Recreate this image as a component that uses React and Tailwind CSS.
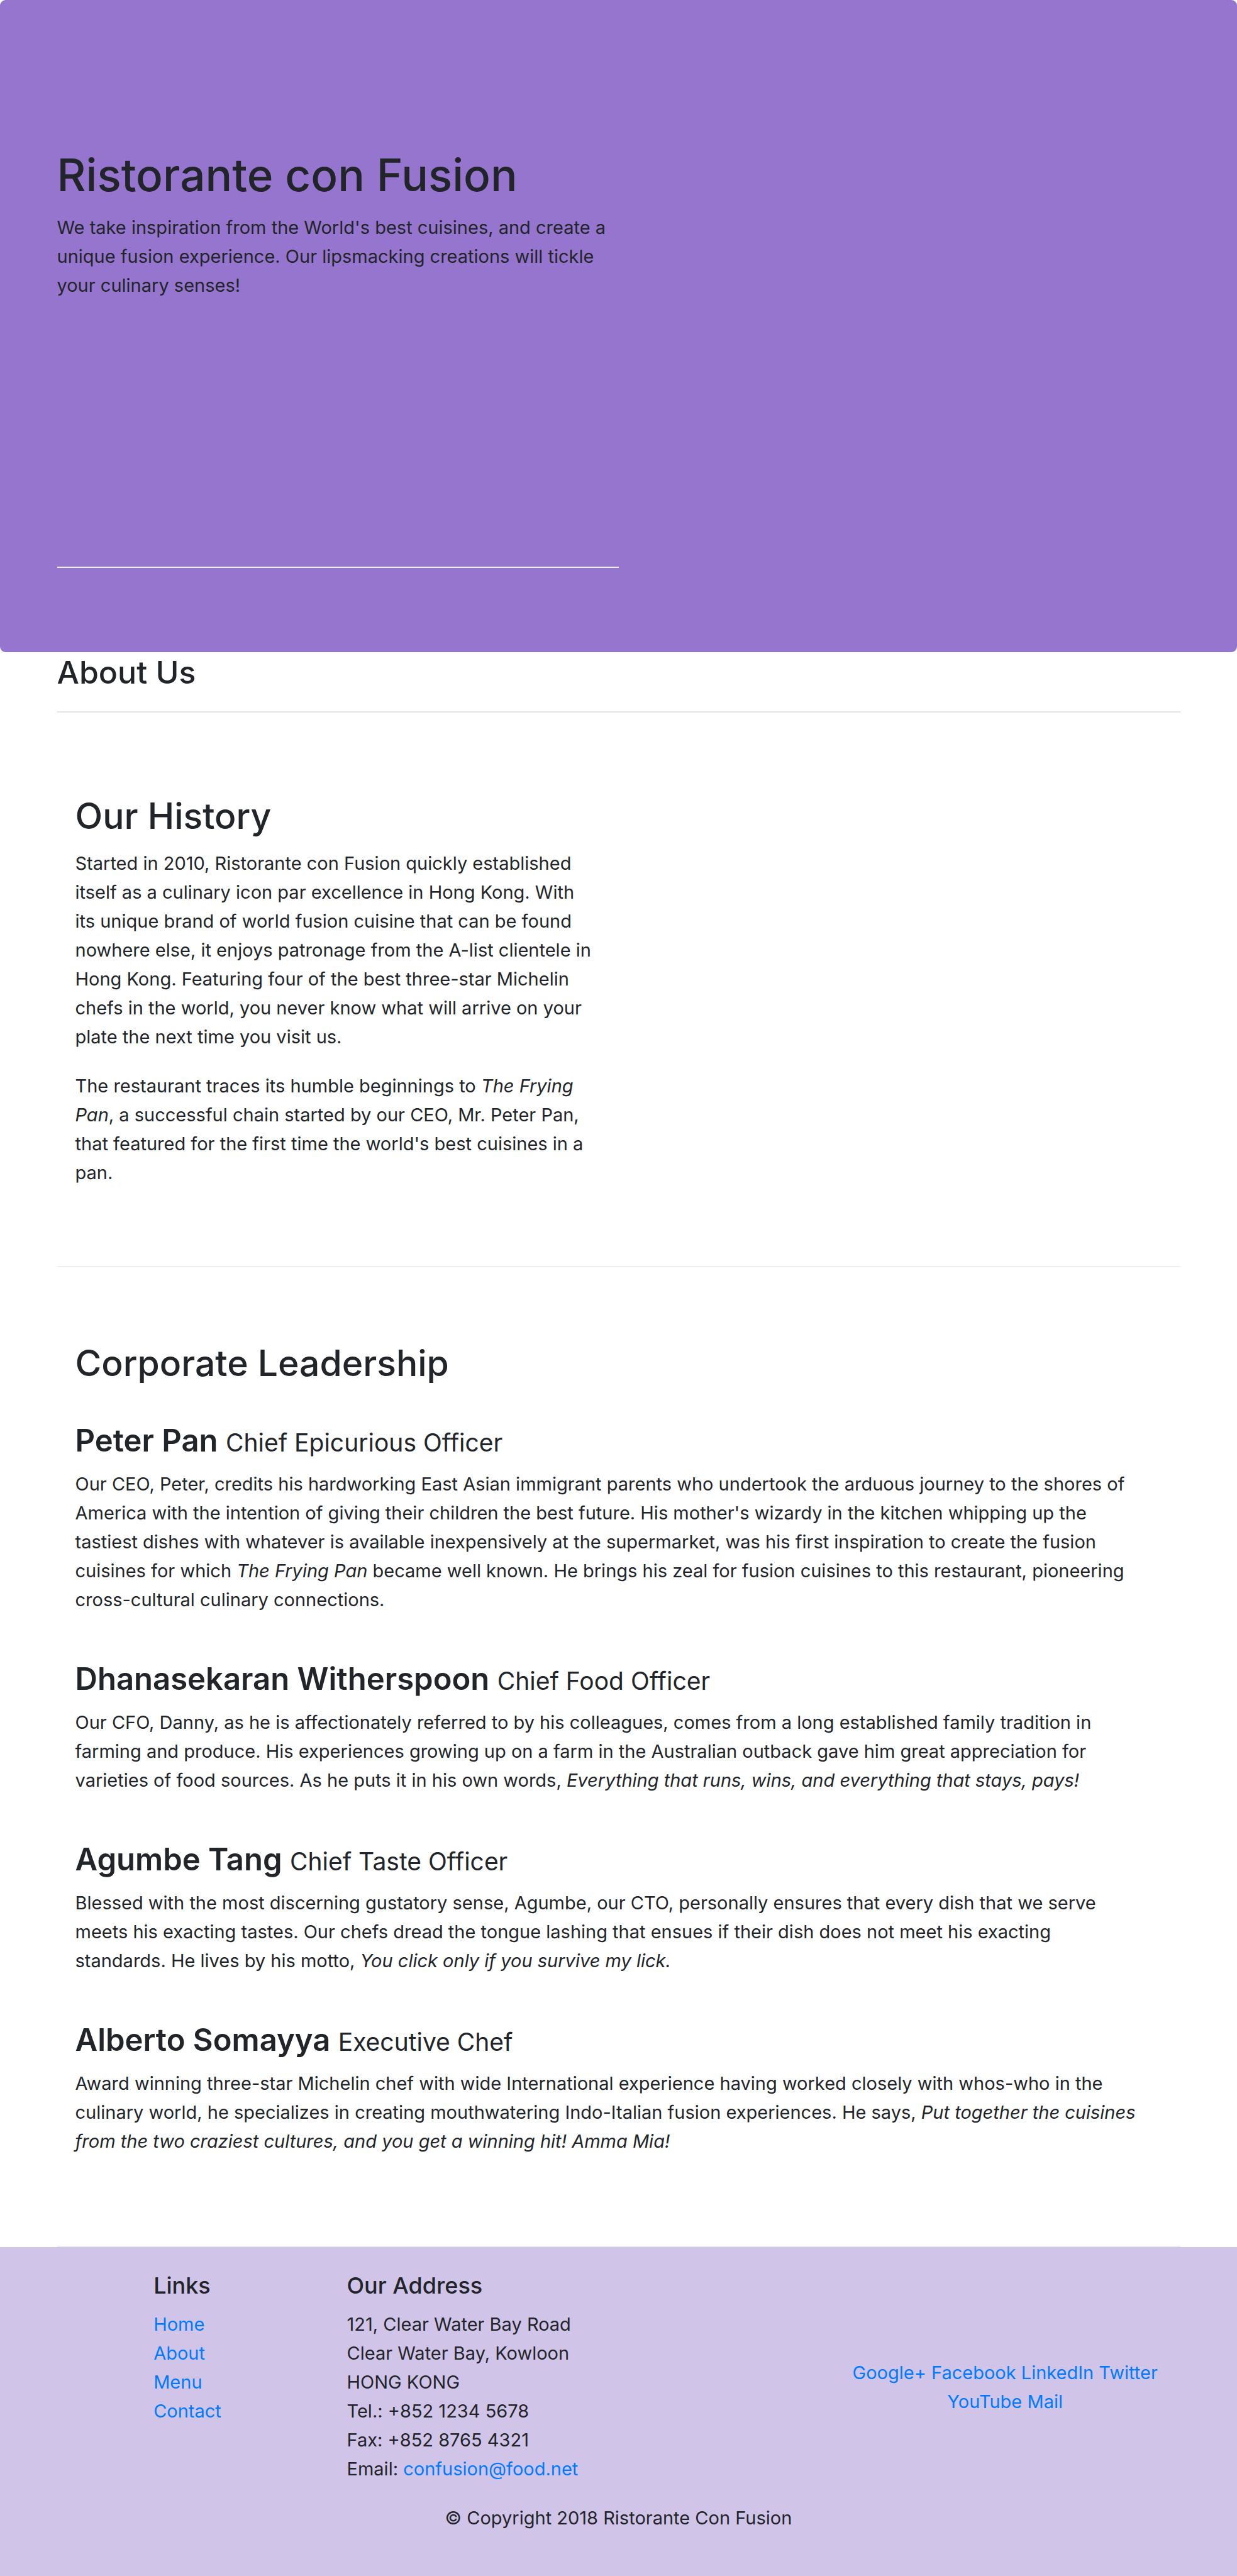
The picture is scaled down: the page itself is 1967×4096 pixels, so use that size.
const leaders = [
  {
    name: "Peter Pan",
    role: "Chief Epicurious Officer",
    bio: (
      <>
        Our CEO, Peter, credits his hardworking East Asian immigrant parents who undertook the arduous journey to the
        shores of America with the intention of giving their children the best future. His mother's wizardy in the
        kitchen whipping up the tastiest dishes with whatever is available inexpensively at the supermarket, was his
        first inspiration to create the fusion cuisines for which <em>The Frying Pan</em> became well known. He brings
        his zeal for fusion cuisines to this restaurant, pioneering cross-cultural culinary connections.
      </>
    ),
  },
  {
    name: "Dhanasekaran Witherspoon",
    role: "Chief Food Officer",
    bio: (
      <>
        Our CFO, Danny, as he is affectionately referred to by his colleagues, comes from a long established family
        tradition in farming and produce. His experiences growing up on a farm in the Australian outback gave him great
        appreciation for varieties of food sources. As he puts it in his own words,{" "}
        <em>Everything that runs, wins, and everything that stays, pays!</em>
      </>
    ),
  },
  {
    name: "Agumbe Tang",
    role: "Chief Taste Officer",
    bio: (
      <>
        Blessed with the most discerning gustatory sense, Agumbe, our CTO, personally ensures that every dish that we
        serve meets his exacting tastes. Our chefs dread the tongue lashing that ensues if their dish does not meet his
        exacting standards. He lives by his motto, <em>You click only if you survive my lick.</em>
      </>
    ),
  },
  {
    name: "Alberto Somayya",
    role: "Executive Chef",
    bio: (
      <>
        Award winning three-star Michelin chef with wide International experience having worked closely with whos-who in
        the culinary world, he specializes in creating mouthwatering Indo-Italian fusion experiences. He says,{" "}
        <em>Put together the cuisines from the two craziest cultures, and you get a winning hit! Amma Mia!</em>
      </>
    ),
  },
];

const pages = ["Home", "About", "Menu", "Contact"];
const socials = ["Google+", "Facebook", "LinkedIn", "Twitter", "YouTube", "Mail"];

function Container({ children }) {
  return <div className="mx-auto w-full max-w-[1844px] px-[29px]">{children}</div>;
}

function Link({ href = "#", children }) {
  return (
    <a href={href} className="text-[#007bff] hover:underline">
      {children}
    </a>
  );
}

export default function App() {
  return (
    <div className="min-h-screen bg-white font-['Inter',sans-serif] text-[29px] leading-[46px] text-[#212529]">
      <header className="rounded-[9px] bg-[#9575cd] pt-[232px] pb-[134px]">
        <Container>
          <div className="w-1/2">
            <h1 className="mb-[15px] text-[71px] leading-[92px] font-medium">Ristorante con Fusion</h1>
            <p>
              We take inspiration from the World's best cuisines, and create a unique fusion experience. Our lipsmacking
              creations will tickle your culinary senses!
            </p>
            <hr className="mt-[424px] border-t-2 border-[#eeeeee]" />
          </div>
        </Container>
      </header>

      <main>
        <Container>
          <h3 className="mb-[29px] text-[50px] leading-[65px] font-medium">About Us</h3>
          <hr className="border-t-2 border-[#e5e5e5]" />

          <section className="border-b-2 border-[#eeeeee] px-[29px] pt-[128px] pb-[125px]">
            <div className="w-1/2 pr-[32px]">
              <h2 className="mb-[15px] text-[57px] leading-[74px] font-medium">Our History</h2>
              <p className="mb-[32px]">
                Started in 2010, Ristorante con Fusion quickly established itself as a culinary icon par excellence in
                Hong Kong. With its unique brand of world fusion cuisine that can be found nowhere else, it enjoys
                patronage from the A-list clientele in Hong Kong. Featuring four of the best three-star Michelin chefs
                in the world, you never know what will arrive on your plate the next time you visit us.
              </p>
              <p>
                The restaurant traces its humble beginnings to <em>The Frying Pan</em>, a successful chain started by
                our CEO, Mr. Peter Pan, that featured for the first time the world's best cuisines in a pan.
              </p>
            </div>
          </section>

          <section className="border-b-2 border-[#eeeeee] px-[29px] pt-[116px] pb-[143px]">
            <h2 className="mb-[53px] text-[57px] leading-[74px] font-medium">Corporate Leadership</h2>
            <div className="flex flex-col gap-[70px]">
              {leaders.map(({ name, role, bio }) => (
                <article key={name}>
                  <h3 className="mb-[14px] text-[49px] leading-[65px] font-semibold">
                    {name} <small className="text-[39px] leading-none font-normal">{role}</small>
                  </h3>
                  <p className="pr-[32px]">{bio}</p>
                </article>
              ))}
            </div>
          </section>
        </Container>
      </main>

      <footer className="bg-[#d1c4e9] pt-[38px] pb-[69px]">
        <div className="mx-auto grid w-full max-w-[1844px] grid-cols-12">
          <div className="col-span-2 col-start-2 px-[29px]">
            <h5 className="mb-[16px] text-[36px] leading-[46px] font-medium">Links</h5>
            <ul>
              {pages.map((page) => (
                <li key={page}>
                  <Link>{page}</Link>
                </li>
              ))}
            </ul>
          </div>
          <div className="col-span-5 px-[29px]">
            <h5 className="mb-[16px] text-[36px] leading-[46px] font-medium">Our Address</h5>
            <address className="not-italic">
              121, Clear Water Bay Road
              <br />
              Clear Water Bay, Kowloon
              <br />
              HONG KONG
              <br />
              Tel.: +852 1234 5678
              <br />
              Fax: +852 8765 4321
              <br />
              Email: <Link href="mailto:confusion@food.net">confusion@food.net</Link>
            </address>
          </div>
          <nav className="col-span-4 self-center px-[29px] pt-[32px] text-center">
            {socials.map((name) => (
              <span key={name}>
                <Link>{name}</Link>{" "}
              </span>
            ))}
          </nav>
        </div>
        <p className="mt-[32px] text-center">© Copyright 2018 Ristorante Con Fusion</p>
      </footer>
    </div>
  );
}
